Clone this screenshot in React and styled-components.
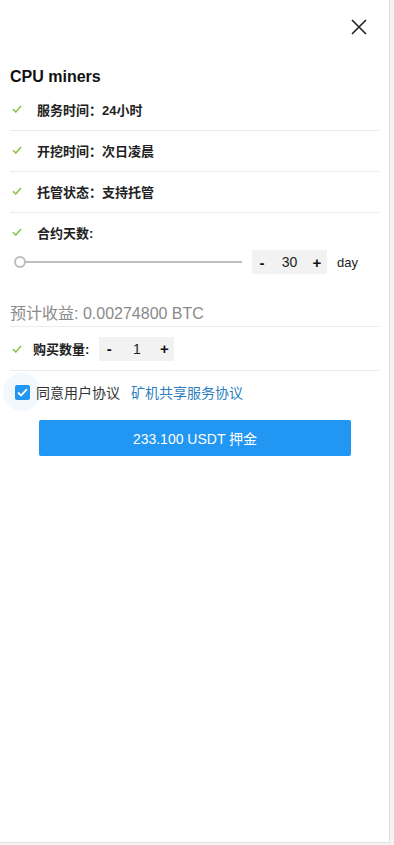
import React, { useState } from 'react';
import styled, { createGlobalStyle } from 'styled-components';

const GlobalStyle = createGlobalStyle`
  html, body { margin:0; padding:0; background:#f4f4f4; }
  body { font-family: "Liberation Sans", Arial, "Noto Sans CJK SC", sans-serif; color:#222; }
`;

const Drawer = styled.div`
  width:390px;
  height:843px;
  background:#fff;
  box-sizing:border-box;
  border-right:1px solid #e2e2e2;
  border-bottom:1px solid #e2e2e2;
  padding:0 10px;
`;

const TopBar = styled.div`
  height:54px;
  display:flex;
  justify-content:flex-end;
  align-items:center;
  padding-right:10px;
`;

const CloseBtn = styled.button`
  background:none;
  border:none;
  padding:0;
  width:20px;
  height:20px;
  display:flex;
  align-items:center;
  justify-content:center;
  cursor:pointer;
`;

const Title = styled.h2`
  margin:12px 0 2px;
  font-size:16px;
  font-weight:bold;
  line-height:22px;
  color:#111;
`;

const Row = styled.div`
  display:flex;
  align-items:center;
  height:38px;
  padding-bottom:${({ last }) => (last ? '0' : '2px')};
  border-bottom:${({ last }) => (last ? 'none' : '1px solid #ebebeb')};
`;

const Check = styled.span`
  width:${({ narrow }) => (narrow ? '21px' : '25px')};
  padding-left:2px;
  display:flex;
  align-items:center;
`;

const Label = styled.span`
  font-size:13px;
  font-weight:bold;
  color:#222;
`;

const SliderRow = styled.div`
  display:flex;
  align-items:center;
  height:22px;
  padding-left:10px;
`;

const Track = styled.div`
  position:relative;
  width:222px;
  height:2px;
  background:#bdbdbd;
  margin-right:10px;
`;

const Thumb = styled.span`
  position:absolute;
  left:-6px;
  top:-5px;
  width:8px;
  height:8px;
  border-radius:50%;
  border:2px solid #bdbdbd;
  background:#fff;
`;

const Stepper = styled.div`
  display:flex;
  align-items:center;
  width:75px;
  height:24px;
  flex-shrink:0;
  background:#f2f2f2;
  font-size:14px;
`;

const StepBtn = styled.button`
  width:20px;
  border:none;
  background:none;
  padding:0;
  font-size:15px;
  font-weight:bold;
  color:#111;
  font-family:inherit;
  cursor:pointer;
`;

const StepValue = styled.span`
  flex:1;
  text-align:center;
  color:#222;
`;

const Unit = styled.span`
  margin-left:10px;
  font-size:13px;
  color:#222;
`;

const Estimate = styled.div`
  margin-top:30px;
  height:23px;
  line-height:22px;
  font-size:16px;
  color:#8a8a8a;
  border-bottom:1px solid #ebebeb;
`;

const QtyRow = styled.div`
  display:flex;
  align-items:center;
  height:43px;
  border-bottom:1px solid #ebebeb;
`;

const QtyLabel = styled(Label)`
  margin-right:10px;
`;

const AgreeRow = styled.label`
  display:flex;
  align-items:center;
  height:42px;
  font-size:14px;
  color:#333;
`;

const BoxWrap = styled.span`
  width:38px;
  height:38px;
  margin-left:-7px;
  margin-right:-5px;
  border-radius:50%;
  background:#f3f8fe;
  display:flex;
  align-items:center;
  justify-content:center;
`;

const Box = styled.span`
  width:15px;
  height:15px;
  border-radius:2px;
  box-sizing:border-box;
  background:${({ checked }) => (checked ? '#2196f3' : '#fff')};
  border:${({ checked }) => (checked ? 'none' : '2px solid #888')};
  display:flex;
  align-items:center;
  justify-content:center;
`;

const Link = styled.a`
  margin-left:11px;
  color:#2d7fc1;
  text-decoration:none;
`;

const Submit = styled.button`
  display:block;
  margin:7px 0 0 29px;
  width:312px;
  height:36px;
  border:none;
  border-radius:2px;
  background:#2196f3;
  color:#fff;
  font-size:14px;
  font-family:inherit;
  cursor:pointer;
`;

const CheckIcon = () => (
  <svg width="10" height="8" viewBox="0 0 10 8">
    <path d="M1 4.2 L3.8 7 L9 1" fill="none" stroke="#8bc34a" strokeWidth="1.6" />
  </svg>
);

const features = ['服务时间：24小时', '开挖时间：次日凌晨', '托管状态：支持托管'];

const App = () => {
  const [days, setDays] = useState(30);
  const [qty, setQty] = useState(1);
  const [agree, setAgree] = useState(true);
  return (
    <>
      <GlobalStyle />
      <Drawer>
        <TopBar>
          <CloseBtn aria-label="close">
            <svg width="16" height="16" viewBox="0 0 16 16">
              <path d="M1 1 L15 15 M15 1 L1 15" stroke="#222" strokeWidth="1.6" />
            </svg>
          </CloseBtn>
        </TopBar>
        <Title>CPU miners</Title>
        {features.map((f) => (
          <Row key={f}>
            <Check><CheckIcon /></Check>
            <Label>{f}</Label>
          </Row>
        ))}
        <Row last>
          <Check><CheckIcon /></Check>
          <Label>合约天数:</Label>
        </Row>
        <SliderRow>
          <Track><Thumb /></Track>
          <Stepper>
            <StepBtn onClick={() => setDays(Math.max(1, days - 1))}>-</StepBtn>
            <StepValue>{days}</StepValue>
            <StepBtn onClick={() => setDays(days + 1)}>+</StepBtn>
          </Stepper>
          <Unit>day</Unit>
        </SliderRow>
        <Estimate>预计收益: 0.00274800 BTC</Estimate>
        <QtyRow>
          <Check narrow><CheckIcon /></Check>
          <QtyLabel>购买数量:</QtyLabel>
          <Stepper>
            <StepBtn onClick={() => setQty(Math.max(1, qty - 1))}>-</StepBtn>
            <StepValue>{qty}</StepValue>
            <StepBtn onClick={() => setQty(qty + 1)}>+</StepBtn>
          </Stepper>
        </QtyRow>
        <AgreeRow onClick={() => setAgree(!agree)}>
          <BoxWrap>
            <Box checked={agree}>
              {agree && (
                <svg width="11" height="9" viewBox="0 0 11 9">
                  <path d="M1 4.5 L4 7.5 L10 1.2" fill="none" stroke="#fff" strokeWidth="1.8" />
                </svg>
              )}
            </Box>
          </BoxWrap>
          同意用户协议
          <Link href="#">矿机共享服务协议</Link>
        </AgreeRow>
        <Submit>233.100 USDT 押金</Submit>
      </Drawer>
    </>
  );
};

export default App;
